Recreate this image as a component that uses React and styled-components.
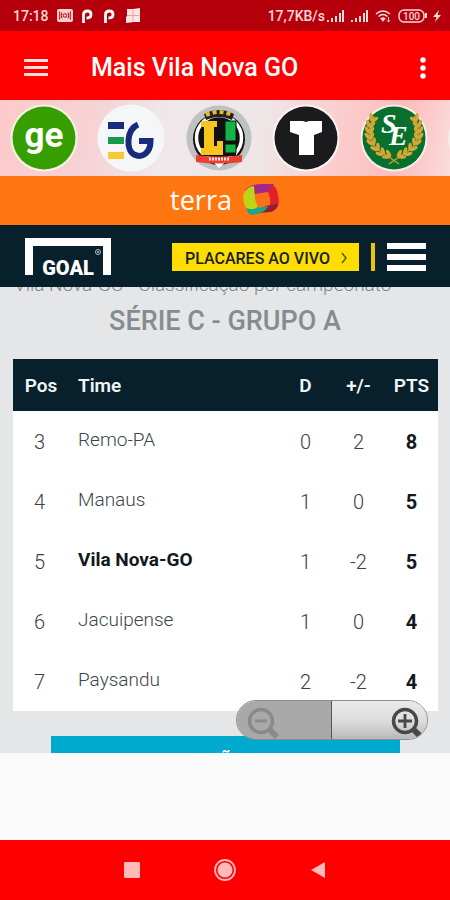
import React from "react";
import styled, { createGlobalStyle } from "styled-components";

const GlobalStyle = createGlobalStyle`
  * {
    box-sizing: border-box;
  }
  body {
    margin: 0;
    background: #fafafa;
    font-family: Roboto, "Liberation Sans", sans-serif;
  }
  button {
    font-family: inherit;
    border: none;
    padding: 0;
    cursor: pointer;
  }
  svg {
    display: block;
  }
`;

const Page = styled.div`
  display: flex;
  flex-direction: column;
  min-height: 100vh;
`;

const StatusBar = styled.div`
  display: flex;
  align-items: center;
  justify-content: space-between;
  height: 31px;
  padding: 0 9px 0 13px;
  background: #b5000b;
  color: #ffd9d9;
  font-size: 14px;
  font-weight: 500;
`;

const StatusGroup = styled.div`
  display: flex;
  align-items: center;
  gap: ${(props) => props.$gap}px;
`;

const AppBar = styled.header`
  display: flex;
  align-items: center;
  height: 69px;
  padding: 4px 16px 0 20px;
  background: #ff0000;
  color: #fff;
`;

const IconButton = styled.button`
  display: flex;
  align-items: center;
  justify-content: center;
  width: ${(props) => props.$width || 32}px;
  height: 32px;
  background: transparent;
  color: inherit;
`;

const AppTitle = styled.h1`
  flex: 1;
  margin: 0 0 0 39px;
  font-size: 25px;
  font-weight: 500;
  line-height: 32px;
`;

const SourceStrip = styled.nav`
  display: flex;
  height: 76px;
  overflow: hidden;
  background: linear-gradient(
    100deg,
    #fdcaca 0%,
    #f6d3d6 22%,
    #efe7e9 36%,
    #efe6e8 58%,
    #fbd0cf 72%,
    #fdbcbc 88%,
    #fbdcdc 100%
  );
`;

const SourceLink = styled.a`
  display: flex;
  flex: 0 0 calc(100% * 7 / 36);
  align-items: center;
  justify-content: center;
`;

const TerraBar = styled.div`
  display: flex;
  align-items: center;
  justify-content: center;
  gap: 10px;
  height: 49px;
  padding-bottom: 2px;
  background: #ff7711;
  color: #fff;
  font-family: "Open Sans", sans-serif;
  font-size: 27px;
  font-weight: 500;
  line-height: 32px;
`;

const GoalBar = styled.div`
  display: flex;
  align-items: center;
  height: 62px;
  padding: 2px 24px 0 25px;
  background: #07202c;
`;

const LiveButton = styled.button`
  display: flex;
  align-items: center;
  justify-content: space-between;
  width: 187px;
  height: 28px;
  margin-left: auto;
  padding: 2px 11px 0 13px;
  background: #ffdd00;
  color: #14211f;
  font-size: 16px;
  font-weight: 500;
`;

const Divider = styled.span`
  width: 4px;
  height: 28px;
  margin: 0 12px;
  background: #e8c40c;
`;

const WebView = styled.main`
  position: relative;
  overflow: hidden;
  background: #e4e6e7;
`;

const Breadcrumb = styled.p`
  margin: -14px 0 0;
  padding-left: 14px;
  color: #80878b;
  font-size: 19px;
  font-weight: 300;
  line-height: 24px;
  white-space: nowrap;
`;

const GroupTitle = styled.h2`
  margin: 6px 0 0;
  color: #858c90;
  font-size: 27px;
  font-weight: 500;
  line-height: 36px;
  text-align: center;
`;

const TableWrap = styled.div`
  margin: 20px 12px 0 13px;
  background: #fff;
`;

const Standings = styled.table`
  width: 100%;
  border-collapse: collapse;
  table-layout: fixed;
`;

const HeadCell = styled.th`
  width: ${(props) => props.$width};
  height: 52px;
  padding: ${(props) => (props.$left ? "0 0 0 9px" : "0")};
  background: #07202c;
  color: #f1f4f5;
  font-size: 19px;
  font-weight: 600;
  text-align: ${(props) => (props.$left ? "left" : "center")};
  white-space: nowrap;
`;

const Cell = styled.td`
  height: 60px;
  padding: 2px 0 0;
  color: #3b4144;
  font-size: 20px;
  font-weight: ${(props) => (props.$bold ? 700 : 300)};
  text-align: center;
`;

const PosCell = styled(Cell)`
  padding-right: 3px;
`;

const TeamCell = styled(Cell)`
  padding: 0 0 4px 9px;
  color: ${(props) => (props.$bold ? "#14191c" : "#3b464c")};
  font-size: 19px;
  text-align: left;
`;

const PointsCell = styled(Cell)`
  color: #14191c;
`;

const FullTableButton = styled.button`
  display: block;
  width: calc(100% - 101px);
  height: 50px;
  margin: 25px 50px -33px 51px;
  background: #00a9ce;
  color: #fff;
  font-size: 20px;
  font-weight: 500;
`;

const ZoomControls = styled.div`
  position: absolute;
  right: 22px;
  bottom: 13px;
  display: flex;
  overflow: hidden;
  border: 1px solid #8d8d8d;
  border-radius: 20px;
`;

const ZoomButton = styled.button`
  display: flex;
  align-items: center;
  justify-content: ${(props) => (props.$out ? "flex-start" : "flex-end")};
  width: 95px;
  height: 38px;
  padding: 4px 2px 0 8px;
  border-right: ${(props) => (props.$out ? "1px solid #555" : "none")};
  background: ${(props) =>
    props.$out ? "#a9a9a9" : "linear-gradient(#e9e9e9, #dedede 50%, #b9b9b9)"};
  color: ${(props) => (props.$out ? "#8a8a8a" : "#484848")};
`;

const BottomNav = styled.nav`
  display: flex;
  align-items: center;
  justify-content: center;
  gap: 61px;
  height: 60px;
  margin-top: auto;
  background: #ff0000;
  color: #ffb9b9;
`;

const standings = [
  { pos: 3, team: "Remo-PA", d: 0, diff: "2", pts: 8 },
  { pos: 4, team: "Manaus", d: 1, diff: "0", pts: 5 },
  { pos: 5, team: "Vila Nova-GO", d: 1, diff: "-2", pts: 5, current: true },
  { pos: 6, team: "Jacuipense", d: 1, diff: "0", pts: 4 },
  { pos: 7, team: "Paysandu", d: 2, diff: "-2", pts: 4 },
];

const SignalIcon = () => (
  <svg width="18" height="12" viewBox="0 0 18 12" fill="currentColor">
    <rect x="0" y="10" width="2" height="2" />
    <rect x="4" y="8" width="2" height="4" />
    <rect x="8" y="6" width="2" height="6" />
    <rect x="12" y="3" width="2" height="9" />
    <rect x="15" y="0" width="2" height="12" />
  </svg>
);

const CastIcon = () => (
  <svg width="16" height="13" viewBox="0 0 16 13">
    <rect width="16" height="13" rx="2" fill="#ffd0d0" />
    <g fill="none" stroke="#b5000b">
      <circle cx="8" cy="6.500" r="1.800" />
      <path d="M5 3.500q-1.500 3 0 6M11 3.500q1.500 3 0 6M2.700 2.500v8M13.300 2.500v8" />
    </g>
  </svg>
);

const ParkingIcon = () => (
  <svg width="12" height="14" viewBox="0 0 12 14" fill="none" stroke="#fff" strokeWidth="2.800">
    <path d="M2.500 14V5.500q0-3.500 4-3.500 3.500 0 3.500 3.500T5.500 9" />
  </svg>
);

const GalleryIcon = () => (
  <svg width="16" height="15" viewBox="0 0 16 15">
    <path d="M2 1h6l7-1v14H9l-8 1V9l1-1z" fill="#ffe4e4" />
    <path d="M8 2v11M2 7.500h12" stroke="#e9a0a5" fill="none" />
  </svg>
);

const WifiIcon = () => (
  <svg width="17" height="14" viewBox="0 0 17 14" fill="none" stroke="currentColor" strokeWidth="1.500">
    <path d="M1 5q7-6 14 0M3.500 7.500q4.500-4 9 0" />
    <path d="M5.500 9.500q2.500-2 5 0L8 12.500z" fill="currentColor" strokeWidth="0.500" />
    <path d="M13.500 8v5M12 11.500l1.500 1.500 1.500-1.500" strokeWidth="1" />
  </svg>
);

const BatteryIcon = () => (
  <svg width="29" height="14" viewBox="0 0 29 14">
    <rect x="1" y="1" width="25" height="12" rx="5" fill="none" stroke="currentColor" strokeWidth="1.400" />
    <rect x="27" y="4" width="2" height="5" fill="currentColor" />
    <text x="13.500" y="10.500" fontSize="10" textAnchor="middle" fill="currentColor">
      100
    </text>
  </svg>
);

const BoltIcon = () => (
  <svg width="8" height="12" viewBox="0 0 8 12" fill="currentColor">
    <path d="M6 0L0 7h3.500L2 12l6-7H4.500z" />
  </svg>
);

const GeLogo = () => (
  <svg width="68" height="68" viewBox="0 0 68 68">
    <circle cx="34" cy="34" r="33.500" fill="#f5f3e6" />
    <circle cx="34" cy="34" r="31.500" fill="#369e00" />
    <text
      x="34"
      y="43"
      textAnchor="middle"
      fontFamily="Roboto, sans-serif"
      fontWeight="700"
      fontSize="35"
      fill="#fff"
    >
      ge
    </text>
  </svg>
);

const GazetaLogo = () => (
  <svg width="68" height="68" viewBox="0 0 68 68">
    <circle cx="34" cy="34" r="33.500" fill="#f5f6f8" />
    <path d="M11 18h16v7H11z" fill="#182a7c" />
    <path d="M11 33h16v7H11z" fill="#159a50" />
    <path d="M11 48h16v7H11z" fill="#f8c932" />
    <path
      d="M41 20.500C29 26 29 46 37 50.500C46 55 53.500 48 53.500 37H42"
      fill="none"
      stroke="#182a7c"
      strokeWidth="6"
    />
  </svg>
);

const LanceLogo = () => (
  <svg width="68" height="68" viewBox="0 0 68 68">
    <circle cx="34" cy="34" r="32.500" fill="#bfc2c2" />
    <circle cx="34" cy="35" r="26" fill="#111" />
    <circle cx="34" cy="34" r="22.500" fill="none" stroke="#fff" strokeWidth="3.500" />
    <path d="M19 10q15-8 30 0l-2 6q-13-6-26 0z" fill="#222" />
    <path d="M21 11q13-6 26 0" fill="none" stroke="#e8bd27" strokeWidth="4" strokeDasharray="4 3" />
    <path d="M17 17h34v35H17z" fill="#111" />
    <path d="M16 17h16v6h-3v19h3v-5h6v14H16v-7h3V23h-3z" fill="#f8c51d" />
    <path d="M40 17h11v20H40zM40 40h11v9H40z" fill="#12b546" stroke="#111" />
    <path d="M25 55h19l-10 9z" fill="#fff" />
    <path d="M11 51q23 3 46 0v7q-23 3-46 0z" fill="#ed3e32" />
    <path d="M24 55h21" stroke="#ffe1da" strokeWidth="3" strokeDasharray="2 1" />
  </svg>
);

const TorcedoresLogo = () => (
  <svg width="68" height="68" viewBox="0 0 68 68">
    <circle cx="34" cy="34" r="33.500" fill="#faf4f4" />
    <circle cx="34" cy="34" r="31.500" fill="#1b1b1d" />
    <path d="M18 17h13l3 1 3-1h13v11l-8 3v20H27V31l-9-3z" fill="#fff" />
  </svg>
);

const leaves = [
  [13, 13, 28],
  [10, 19, 12],
  [9, 25, 0],
  [9, 31, -8],
  [11, 37, -20],
  [15, 43, -32],
  [20, 48, -45],
  [26, 51, -58],
];

const LaurelBranch = () => (
  <g fill="none" stroke="#c79a2e">
    <path d="M14 12Q1 38 26 51l13 9" strokeWidth="1.500" />
    {leaves.map(([x, y, angle]) => (
      <g key={y} transform={`translate(${x} ${y}) rotate(${angle})`} fill="#d5a638" stroke="none">
        <ellipse cx="-2" cy="0" rx="1.800" ry="4" transform="rotate(-28)" />
        <ellipse cx="3" cy="0" rx="1.800" ry="4" transform="rotate(28)" />
      </g>
    ))}
  </g>
);

const PalmeirasLogo = () => (
  <svg width="68" height="68" viewBox="0 0 68 68">
    <circle cx="34" cy="34" r="33.500" fill="#f4eeec" />
    <circle cx="34" cy="34" r="31.500" fill="#08702c" />
    <LaurelBranch />
    <g transform="translate(68 0) scale(-1 1)">
      <LaurelBranch />
    </g>
    <text
      x="21"
      y="29"
      fill="#fff"
      fontFamily="Liberation Serif, serif"
      fontStyle="italic"
      fontWeight="700"
      fontSize="28"
    >
      S<tspan x="29" y="41">E</tspan>
    </text>
  </svg>
);

const BlankLogo = () => (
  <svg width="68" height="68" viewBox="0 0 68 68">
    <circle cx="34" cy="34" r="33" fill="#f3eded" />
  </svg>
);

const TerraLogo = () => (
  <svg width="38" height="32" viewBox="0 0 38 32">
    <path d="M3 6Q9 0 20 0h12l-5 9-14 2z" fill="#a3268f" />
    <path d="M29 1q5 1 6 6 3 9 1 15-2 5-8 6l-4-5 1-13z" fill="#e0202d" />
    <path d="M36 20q-1 6-8 8l-18 2q2-6 6-8l11-1z" fill="#8c2430" />
    <path d="M4 23q7 3 13-2l9 2-5 5-11 3q-5-1-6-8z" fill="#1ba58f" />
    <path d="M2 9q4-7 10-7 0 11 5 20-5 5-13 2-4-7-2-15z" fill="#bfd414" />
    <path d="M13 10l13-2q3 7 2 13l-11 3q-5-7-4-14z" fill="#ff6f1a" />
  </svg>
);

const GoalLogo = () => (
  <svg width="86" height="38" viewBox="0 0 86 38">
    <path d="M0 0h86v37h-8V8H8v29H0z" fill="#fff" />
    <text
      x="43"
      y="37"
      textAnchor="middle"
      fontFamily="Roboto, sans-serif"
      fontWeight="900"
      fontSize="20"
      fill="#fff"
    >
      GOAL
    </text>
    <circle cx="73" cy="14" r="2.500" fill="none" stroke="#b8c2c7" />
    <circle cx="73" cy="14" r="1" fill="#b8c2c7" />
  </svg>
);

const MagnifierIcon = ({ plus }) => (
  <svg width="36" height="34" viewBox="0 0 36 34" fill="none" stroke="currentColor">
    <circle cx="16" cy="16" r="11.500" strokeWidth="3.500" />
    <path d="M24 24l8 8" strokeWidth="6" />
    <path d={plus ? "M9 16h14M16 9v14" : "M10 16h12"} strokeWidth="2.800" />
  </svg>
);

const sources = [
  { name: "Globo Esporte", Logo: GeLogo },
  { name: "Gazeta Esportiva", Logo: GazetaLogo },
  { name: "Lance", Logo: LanceLogo },
  { name: "Torcedores", Logo: TorcedoresLogo },
  { name: "Palmeiras", Logo: PalmeirasLogo },
  { name: "Mais", Logo: BlankLogo },
];

const App = () => {
  return (
    <Page>
      <GlobalStyle />
      <StatusBar>
        <StatusGroup $gap={8}>
          <span>17:18</span>
          <CastIcon />
          <StatusGroup $gap={10}>
            <ParkingIcon />
            <ParkingIcon />
            <GalleryIcon />
          </StatusGroup>
        </StatusGroup>
        <StatusGroup $gap={6}>
          <StatusGroup $gap={2}>
            <span>17,7KB/s</span>
            <SignalIcon />
          </StatusGroup>
          <SignalIcon />
          <WifiIcon />
          <BatteryIcon />
          <BoltIcon />
        </StatusGroup>
      </StatusBar>

      <AppBar>
        <IconButton aria-label="Menu">
          <svg width="24" height="18" viewBox="0 0 24 18" fill="#ffdcdc">
            <path d="M0 0h24v3H0zM0 7h24v3H0zM0 14h24v3H0z" />
          </svg>
        </IconButton>
        <AppTitle>Mais Vila Nova GO</AppTitle>
        <IconButton $width={22} aria-label="Mais opções">
          <svg width="6" height="22" viewBox="0 0 6 22" fill="#fff">
            <circle cx="3" cy="3" r="2.700" />
            <circle cx="3" cy="11" r="2.700" />
            <circle cx="3" cy="19" r="2.700" />
          </svg>
        </IconButton>
      </AppBar>

      <SourceStrip>
        {sources.map(({ name, Logo }) => (
          <SourceLink key={name} href="#" aria-label={name}>
            <Logo />
          </SourceLink>
        ))}
      </SourceStrip>

      <TerraBar>
        terra
        <TerraLogo />
      </TerraBar>

      <GoalBar>
        <GoalLogo />
        <LiveButton>
          PLACARES AO VIVO
          <svg width="8" height="12" viewBox="0 0 8 12" fill="none" stroke="#5c5520" strokeWidth="1.500">
            <path d="M2 1l4 5-4 5" />
          </svg>
        </LiveButton>
        <Divider />
        <IconButton $width={39} aria-label="Abrir menu">
          <svg width="39" height="28" viewBox="0 0 39 28" fill="#fff">
            <path d="M0 0h39v6H0zM0 11h39v6H0zM0 22h39v6H0z" />
          </svg>
        </IconButton>
      </GoalBar>

      <WebView>
        <Breadcrumb>Vila Nova-GO - Classificação por campeonato</Breadcrumb>
        <GroupTitle>SÉRIE C - GRUPO A</GroupTitle>
        <TableWrap>
          <Standings>
            <thead>
              <tr>
                <HeadCell $width="56px">Pos</HeadCell>
                <HeadCell $width="auto" $left>
                  Time
                </HeadCell>
                <HeadCell $width="53px">D</HeadCell>
                <HeadCell $width="53px">+/-</HeadCell>
                <HeadCell $width="53px">PTS</HeadCell>
              </tr>
            </thead>
            <tbody>
              {standings.map((row) => (
                <tr key={row.pos}>
                  <PosCell>{row.pos}</PosCell>
                  <TeamCell $bold={row.current}>{row.team}</TeamCell>
                  <Cell>{row.d}</Cell>
                  <Cell>{row.diff}</Cell>
                  <PointsCell $bold>{row.pts}</PointsCell>
                </tr>
              ))}
            </tbody>
          </Standings>
        </TableWrap>
        <FullTableButton>CLASSIFICAÇÃO COMPLETA</FullTableButton>
        <ZoomControls>
          <ZoomButton $out aria-label="Diminuir zoom">
            <MagnifierIcon />
          </ZoomButton>
          <ZoomButton aria-label="Aumentar zoom">
            <MagnifierIcon plus />
          </ZoomButton>
        </ZoomControls>
      </WebView>

      <BottomNav>
        <IconButton aria-label="Recentes">
          <svg width="16" height="16" viewBox="0 0 16 16" fill="currentColor">
            <rect width="16" height="16" rx="1" />
          </svg>
        </IconButton>
        <IconButton aria-label="Início">
          <svg width="24" height="24" viewBox="0 0 24 24">
            <circle cx="12" cy="12" r="10" fill="none" stroke="currentColor" strokeWidth="1.800" />
            <circle cx="12" cy="12" r="7.500" fill="currentColor" />
          </svg>
        </IconButton>
        <IconButton aria-label="Voltar">
          <svg width="16" height="18" viewBox="0 0 16 18" fill="currentColor">
            <path d="M15 1v16L1 9z" />
          </svg>
        </IconButton>
      </BottomNav>
    </Page>
  );
};

export default App;
